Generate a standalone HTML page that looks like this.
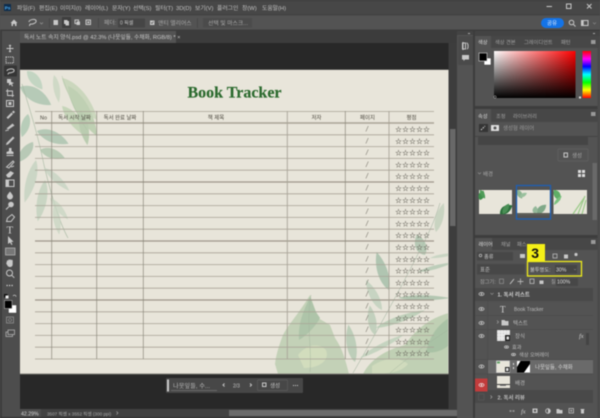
<!DOCTYPE html>
<html><head><meta charset="utf-8">
<style>
html,body{margin:0;padding:0;background:#535353;width:600px;height:418px;overflow:hidden}
svg{position:absolute;left:0;top:0;filter:blur(.42px)}
text{font-family:"Liberation Sans","Noto Sans CJK KR",sans-serif;font-size:5.800px;fill:#c4c4c4}
.d{fill:#4a473e;font-size:5.400px;text-anchor:middle}
.s{font-family:"DejaVu Sans",sans-serif;font-size:7.800px;fill:#6e6b62;stroke:#6e6b62;stroke-width:.12}
.sl{font-size:7px;fill:#77746a;font-style:italic}
.i{fill:none;stroke:#c8c8c8;stroke-width:1}
.f{fill:#c8c8c8}
.hl{stroke:#a8a396;stroke-width:.8}
.hb{stroke:#9d978a;stroke-width:1.200}
.v{stroke:#8d897d;stroke-width:.7}
</style></head><body>
<svg width="600" height="418" viewBox="0 0 600 418" xmlns="http://www.w3.org/2000/svg">
<defs>
<path id="l" d="M0 0C20-22 65-24 100 0C65 20 25 18 0 0Z"/>
<linearGradient id="gw" x1="0" x2="1" y1="0" y2="0"><stop offset="0" stop-color="#fff"/><stop offset="1" stop-color="#f00"/></linearGradient>
<linearGradient id="gb" x1="0" x2="0" y1="0" y2="1"><stop offset="0" stop-color="#000" stop-opacity="0"/><stop offset="1" stop-color="#000"/></linearGradient>
<linearGradient id="gh" x1="0" x2="0" y1="0" y2="1"><stop offset="0" stop-color="#f00"/><stop offset=".17" stop-color="#f0f"/><stop offset=".33" stop-color="#00f"/><stop offset=".5" stop-color="#0ff"/><stop offset=".67" stop-color="#0f0"/><stop offset=".83" stop-color="#ff0"/><stop offset="1" stop-color="#f00"/></linearGradient>
<clipPath id="doc"><rect x="20" y="70" width="428" height="303.500"/></clipPath>
</defs>

<!-- chrome -->
<rect width="600" height="418" fill="#535353"/>
<rect width="600" height="15" fill="#474747"/>
<rect y="0" width="600" height="1" fill="#3a3a3a"/>
<rect y="15" width="600" height="15" fill="#535353"/>
<rect y="14.500" width="600" height=".8" fill="#3d3d3d"/>
<rect y="29.500" width="600" height="1.500" fill="#3c3c3c"/>
<rect x="0" y="31" width="20" height="387" fill="#4d4d4d"/>
<rect x="0" y="31" width="2" height="387" fill="#3c3c3c"/>
<rect x="20" y="31" width="437" height="12" fill="#3c3c3c"/>
<rect x="20" y="31" width="156" height="12" fill="#535353"/>

<!-- menu -->
<rect x="4" y="4" width="7" height="7" fill="#0e2d4d"/>
<text x="4.800" y="9.600" style="font-size:4.600px;font-weight:700;fill:#4fb0f5">Ps</text>
<text x="17" y="10">파일(F)</text><text x="39" y="10">편집(E)</text><text x="60" y="10">이미지(I)</text><text x="85" y="10">레이어(L)</text><text x="112" y="10">문자(Y)</text><text x="133" y="10">선택(S)</text><text x="155" y="10">필터(T)</text><text x="176" y="10">3D(D)</text><text x="195" y="10">보기(V)</text><text x="217" y="10">플러그인</text><text x="242" y="10">창(W)</text><text x="262" y="10">도움말(H)</text>
<path class="i" d="M546.500 6.500H552"/><rect class="i" x="566.500" y="4" width="4.500" height="4.500"/><path class="i" d="M587 4l4.500 4.500M591.500 4L587 8.500"/>

<!-- options -->
<path class="f" d="M14 19.500L10.500 23H11.500V26H13V24H15V26H16.500V23H17.500Z"/>
<path class="i" d="M29 22c0-2.500 6-3.500 7-1.500s-3 4-5.500 3.500c-1 .5-1 1.500-1 2"/>
<path class="i" style="stroke:#999;stroke-width:.7" d="M40 22.500l1.500 1.500 1.500-1.500"/>
<rect x="49" y="18" width=".7" height="10" fill="#444"/>
<rect x="62" y="17" width="9" height="11" fill="#3e3e3e"/>
<rect class="f" x="53.500" y="20" width="4.500" height="5" />
<rect class="f" x="64" y="20" width="3.500" height="4"/><rect class="f" x="65.500" y="21" width="3.500" height="4.500"/>
<rect class="i" x="75" y="20" width="3.500" height="3.500"/><rect class="f" x="76.500" y="21.500" width="3.500" height="3.500"/>
<rect class="i" x="86" y="20" width="4.500" height="4.500"/><rect class="f" x="87.300" y="21.300" width="2" height="2"/>
<rect x="98" y="18" width=".7" height="10" fill="#444"/>
<text x="104" y="24.500" style="fill:#aaa">페더:</text>
<rect x="118" y="18.500" width="27" height="9" fill="#454545"/>
<text x="120" y="24.600" style="font-size:5px">0 픽셀</text>
<rect class="f" x="150" y="20.500" width="4.500" height="4.500"/>
<path d="M151 22.500l1 1 1.500-2" stroke="#444" stroke-width=".6" fill="none"/>
<text x="158" y="25" style="fill:#aaa">앤티 앨리어스</text>
<rect x="197" y="18" width=".7" height="10" fill="#444"/>
<rect x="203" y="18" width="49" height="9.500" fill="#4b4b4b"/>
<text x="208" y="25" style="fill:#aaa">선택 및 마스크...</text>
<rect x="541" y="18" width="23" height="10" rx="5" fill="#1473e6"/>
<text x="547" y="25" style="fill:#e8f0ff;font-size:5.500px">공유</text>
<circle class="i" cx="571.500" cy="22.500" r="2.300"/><path class="i" d="M573.200 24.200l2.300 2.300"/>
<rect class="i" x="581.500" y="20.500" width="6.500" height="5"/><rect class="f" x="581.500" y="20.500" width="2.200" height="5"/>
<path class="i" style="stroke:#888;stroke-width:.7" d="M593 22.500l1.500 1.500 1.500-1.500"/>

<!-- tab -->
<text x="24" y="39" style="font-size:5.700px;fill:#c8c8c8">독서 노트 속지 양식.psd @ 42.3% (나뭇잎들, 수채화, RGB/8) *  ×</text>

<!-- canvas -->
<rect x="20" y="43" width="437" height="366" fill="#282828"/>
<rect x="20" y="69.500" width="429" height="305" fill="#7b7a74"/>
<rect x="20" y="70" width="428.500" height="303.500" fill="#e8e5da"/>

<g clip-path="url(#doc)">
<!-- top-left leaves -->
<g opacity=".72">
<use href="#l" transform="translate(27,71) rotate(50) scale(.24,.3)" fill="#b5cfb9"/>
<use href="#l" transform="translate(20,87) rotate(30) scale(.36,.42)" fill="#a3c1aa"/>
<use href="#l" transform="translate(54,75) rotate(80) scale(.28,.2)" fill="#c6d5bf"/>
<use href="#l" transform="translate(62,78) rotate(50) scale(.55,.42)" fill="#c0d2b2"/>
<use href="#l" transform="translate(68,86) rotate(60) scale(.58,.42)" fill="#b0c8a5"/>
<use href="#l" transform="translate(62,106) rotate(50) scale(.42,.34)" fill="#b9cfad"/>
<use href="#l" transform="translate(80,110) rotate(78) scale(.36,.28)" fill="#a9c3a1"/>
</g>
<path d="M62 76C66 88 73 108 87 130" stroke="#a9c0a2" stroke-width=".4" fill="none"/>
<path d="M22 84C30 110 38 135 44 165C50 190 58 220 68 238" stroke="#a9baa4" stroke-width=".6" fill="none"/>
<g opacity=".75">
<use href="#l" transform="translate(28,114) rotate(105) scale(.24,.26)" fill="#a8c5ae"/>
<use href="#l" transform="translate(33,142) rotate(128) scale(.26,.3)" fill="#a8c0aa"/>
<use href="#l" transform="translate(37,131) rotate(22) scale(.34,.36)" fill="#a5c0aa"/>
<use href="#l" transform="translate(40,150) rotate(18) scale(.26,.3)" fill="#a9c2a8"/>
<use href="#l" transform="translate(36,160) rotate(105) scale(.44,.3)" fill="#c2d2bf"/>
<use href="#l" transform="translate(44,168) rotate(42) scale(.34,.22)" fill="#c4d3c1"/>
<use href="#l" transform="translate(45,180) rotate(100) scale(.42,.3)" fill="#bfd0bc"/>
<use href="#l" transform="translate(50,198) rotate(50) scale(.28,.2)" fill="#c8d6c3"/>
<use href="#l" transform="translate(54,205) rotate(80) scale(.3,.22)" fill="#c8d6c3"/>
</g>
<!-- bottom right big leaves -->
<path d="M310 295C300 312 288 325 283 335C278 348 276 356 275 364L278 374H349C345 358 342 348 335 338L330 325L318 318Z" fill="#c3d1b7"/>
<path d="M310 297C304 310 298 322 299 340C306 336 316 326 320 318L316 312Z" fill="#aec4a9"/>
<path d="M298 355C306 345 318 342 326 350C330 360 320 368 304 368Z" fill="#d2ddbd"/>
<path d="M449 313C430 318 415 330 405 345C385 350 370 360 363 374H449Z" fill="#c0d0b4"/>
<path d="M449 318C438 325 430 335 426 352C434 354 444 350 449 345Z" fill="#a9c2a5"/>
<path d="M372 366C384 358 398 356 408 364C402 372 388 374 372 374Z" fill="#d0dbbd"/>
<path d="M310 372C312 350 306 320 311 295M390 373C405 360 425 345 448 330" stroke="#9fb39c" stroke-width=".4" fill="none"/>
<!-- bottom right branch -->
<path d="M353 373C372 340 400 290 420 250C428 235 435 220 440 203" stroke="#9db09c" stroke-width=".5" fill="none"/>
<g opacity=".8">
<use href="#l" transform="translate(436,232) rotate(-75) scale(.3,.24)" fill="#c2d0bc"/>
<use href="#l" transform="translate(425,255) rotate(-112) scale(.22,.34)" fill="#abc3ac"/>
<use href="#l" transform="translate(430,258) rotate(-10) scale(.28,.1)" fill="#c2d2be"/>
<use href="#l" transform="translate(389,290) rotate(-108) scale(.4,.32)" fill="#a3bea8"/>
<use href="#l" transform="translate(382,310) rotate(-118) scale(.34,.26)" fill="#bfd0bd"/>
<use href="#l" transform="translate(418,272) rotate(-15) scale(.36,.12)" fill="#b2c8b2"/>
<use href="#l" transform="translate(398,298) rotate(0) scale(.52,.16)" fill="#a6bfa8"/>
<use href="#l" transform="translate(375,335) rotate(-100) scale(.3,.26)" fill="#b9ccb7"/>
<use href="#l" transform="translate(376,328) rotate(-20) scale(.52,.2)" fill="#b5cbb3"/>
<use href="#l" transform="translate(355,362) rotate(-100) scale(.38,.3)" fill="#b3c9b1"/>
<use href="#l" transform="translate(360,358) rotate(-28) scale(.5,.16)" fill="#bdd0ba"/>
</g>
</g>

<!-- title -->
<text x="234.500" y="97.500" text-anchor="middle" style="font-family:'Liberation Serif',serif;font-weight:700;font-size:16px;fill:#2b6a2e;stroke:#2b6a2e;stroke-width:.15">Book Tracker</text>

<!-- table -->
<path class="hl" d="M35 111.500H434"/>
<path d="M35 123H434" stroke="#a9a396" stroke-width="1.600"/>
<path class="hl" d="M35 134.800H434M35 146.600H434M35 158.400H434M35 170.200H434M35 193.800H434M35 205.600H434M35 217.400H434M35 229.200H434M35 252.800H434M35 264.600H434M35 276.400H434M35 288.200H434M35 311.800H434M35 323.600H434M35 335.400H434M35 347.200H434M35 359H434"/>
<path class="hb" d="M35 182H434M35 241H434M35 300H434"/>
<path class="v" d="M51.700 111V359M96.700 111V359M143.300 111V359"/>
<path d="M287.300 111V359" stroke="#a9a498" stroke-width=".9"/>
<path class="v" d="M345.300 111V359"/>
<path d="M389 111V359" stroke="#a39e92" stroke-width=".8"/>
<text class="d" x="43.500" y="119.300">No</text>
<text class="d" x="74.500" y="119.300">독서 시작 날짜</text>
<text class="d" x="120" y="119.300">독서 완료 날짜</text>
<text class="d" x="216" y="119.300">책 제목</text>
<text class="d" x="316.500" y="119.300">저자</text>
<text class="d" x="367.500" y="119.300">페이지</text>
<text class="d" x="411.500" y="119.300">평점</text>

<text class="sl" x="366" y="131.500">/</text><text class="sl" x="366" y="143.300">/</text><text class="sl" x="366" y="155.100">/</text><text class="sl" x="366" y="166.900">/</text><text class="sl" x="366" y="178.700">/</text><text class="sl" x="366" y="190.500">/</text><text class="sl" x="366" y="202.300">/</text><text class="sl" x="366" y="214.100">/</text><text class="sl" x="366" y="225.900">/</text><text class="sl" x="366" y="237.700">/</text><text class="sl" x="366" y="249.500">/</text><text class="sl" x="366" y="261.300">/</text><text class="sl" x="366" y="273.100">/</text><text class="sl" x="366" y="284.900">/</text><text class="sl" x="366" y="296.700">/</text><text class="sl" x="366" y="308.500">/</text><text class="sl" x="366" y="320.300">/</text><text class="sl" x="366" y="332.100">/</text><text class="sl" x="366" y="343.900">/</text><text class="sl" x="366" y="355.700">/</text>
<text class="s" x="395" y="132">☆☆☆☆☆</text><text class="s" x="395" y="143.800">☆☆☆☆☆</text><text class="s" x="395" y="155.600">☆☆☆☆☆</text><text class="s" x="395" y="167.400">☆☆☆☆☆</text><text class="s" x="395" y="179.200">☆☆☆☆☆</text><text class="s" x="395" y="191">☆☆☆☆☆</text><text class="s" x="395" y="202.800">☆☆☆☆☆</text><text class="s" x="395" y="214.600">☆☆☆☆☆</text><text class="s" x="395" y="226.400">☆☆☆☆☆</text><text class="s" x="395" y="238.200">☆☆☆☆☆</text><text class="s" x="395" y="250">☆☆☆☆☆</text><text class="s" x="395" y="261.800">☆☆☆☆☆</text><text class="s" x="395" y="273.600">☆☆☆☆☆</text><text class="s" x="395" y="285.400">☆☆☆☆☆</text><text class="s" x="395" y="297.200">☆☆☆☆☆</text><text class="s" x="395" y="309">☆☆☆☆☆</text><text class="s" x="395" y="320.800">☆☆☆☆☆</text><text class="s" x="395" y="332.600">☆☆☆☆☆</text><text class="s" x="395" y="344.400">☆☆☆☆☆</text><text class="s" x="395" y="356.200">☆☆☆☆☆</text>

<!-- contextual bar -->
<rect x="166" y="378" width="137" height="15" rx="1" fill="#474747"/>
<rect x="167" y="379.500" width="2" height="12" fill="#c8c8c8"/>
<text x="173" y="388" style="font-size:6.200px;fill:#b8b8b8">나뭇잎들, 수...</text>
<path d="M171 390.500H217" stroke="#8a8a8a" stroke-width=".6"/>
<path class="i" d="M224.500 383.500l-1.500 1.500 1.500 1.500"/>
<text x="233" y="387.500" style="font-size:5px">2/3</text>
<path class="i" d="M250 383.500l1.500 1.500-1.500 1.500"/>
<rect x="257.500" y="380" width="30" height="10.500" rx="1" fill="none" stroke="#5c5c5c" stroke-width=".7"/>
<rect class="i" x="262.500" y="383" width="3.500" height="3.500"/>
<text x="270" y="387.500" style="font-size:5.500px">생성</text>
<path d="M293 385.500H298.500" stroke="#ccc" stroke-width="1" stroke-dasharray="1 1"/>

<!-- status -->
<rect x="20" y="409" width="437" height="8" fill="#424242"/>
<rect x="20" y="409" width="21" height="8" fill="#4d4d4d"/>
<rect x="229" y="410" width="228" height="6" fill="#6a6a6a"/>
<text x="21" y="415.500" style="font-size:5.200px;fill:#d5d5d5">42.29%</text>
<text x="47" y="415.500" style="font-size:4.600px;fill:#a8a8a8">3507 픽셀 x 3552 픽셀 (300 ppi)</text>
<path d="M116.500 411.500l1.500 1.500-1.500 1.500" stroke="#aaa" stroke-width=".6" fill="none"/>
<rect y="417" width="600" height="1" fill="#2d2d2d"/>

<!-- canvas scrollbar -->
<rect x="448.500" y="43" width="8.500" height="366" fill="#3d3d3d"/>
<rect x="450" y="129" width="5.500" height="97" fill="#686868"/>
<rect x="457" y="31" width="18" height="387" fill="#535353"/>
<rect x="457" y="31" width="18" height="4" fill="#434343"/>
<rect x="473" y="31" width="2" height="387" fill="#3c3c3c"/>
<rect x="458" y="36" width="15" height="29" fill="#4a4a4a"/>
<rect class="i" x="462.500" y="43" width="3" height="6"/><path class="i" d="M466.500 43c2 0 2 5.500 .5 6M463 42v8"/>
<path class="f" d="M462 55h7v4.500h-4l-1.500 1.500v-1.500h-1.500z"/>

<!-- right panels -->
<rect x="475" y="31" width="125" height="387" fill="#535353"/>
<rect x="475" y="31" width="125" height="5" fill="#434343"/>
<rect x="475" y="36" width="125" height="12" fill="#474747"/>
<rect x="475" y="36" width="16" height="12" fill="#535353"/>
<text x="478" y="44" style="font-size:5.200px;fill:#dadada">색상</text>
<text x="495" y="44" style="font-size:5.200px;fill:#a0a0a0">색상 견본</text>
<text x="524" y="44" style="font-size:5.200px;fill:#a0a0a0">그레이디언트</text>
<text x="561" y="44" style="font-size:5.200px;fill:#a0a0a0">패턴</text>
<rect x="591" y="40" width="4.500" height="4" fill="#999"/>
<rect x="494" y="51" width="81.500" height="47" fill="url(#gw)"/>
<rect x="494" y="51" width="81.500" height="47" fill="url(#gb)"/>
<rect x="582.500" y="51" width="8.500" height="47" fill="url(#gh)"/>
<rect x="484" y="58" width="7" height="7" fill="#fff" stroke="#333" stroke-width=".5"/>
<rect x="479" y="53" width="8" height="8" fill="#000" stroke="#ddd" stroke-width=".6"/>
<circle cx="495" cy="97" r="1.200" fill="none" stroke="#ccc" stroke-width=".5"/>
<rect x="579" y="96.500" width="2" height="2" fill="#ddd"/>

<!-- properties -->
<rect x="475" y="106" width="125" height="3" fill="#3d3d3d"/>
<rect x="475" y="109" width="125" height="13" fill="#474747"/>
<rect x="475" y="109" width="16" height="13" fill="#535353"/>
<text x="478" y="118" style="font-size:5.200px;fill:#dadada">속성</text>
<text x="496" y="118" style="font-size:5.200px;fill:#a0a0a0">조정</text>
<text x="513" y="118" style="font-size:5.200px;fill:#a0a0a0">라이브러리</text>
<rect x="591" y="112" width="4.500" height="4" fill="#999"/>
<rect x="479" y="124" width="9" height="8" fill="#353535"/>
<path d="M481 130l4-4" stroke="#ddd" stroke-width="1" stroke-dasharray="1.500 1"/>
<rect x="491" y="125" width="8" height="6" fill="#ddd" rx=".5"/><circle cx="495" cy="128" r="1.500" fill="#555"/>
<text x="503" y="130" style="font-size:5.400px;fill:#999">생성형 레이어</text>
<rect x="475" y="136" width="125" height=".8" fill="#404040"/>
<rect x="478" y="137" width="110" height="8" fill="#454545"/>
<rect x="558" y="149" width="30" height="12" rx="1" fill="none" stroke="#646464" stroke-width=".7"/>
<rect class="i" x="564" y="153" width="3.500" height="4"/>
<text x="572" y="157.500" style="font-size:5.400px;fill:#aaa">생성</text>
<rect x="592.500" y="163" width="4.500" height="57" fill="#696969"/>
<path d="M478 172.500l1.500 1.500 1.500-1.500" stroke="#999" stroke-width=".6" fill="none"/>
<text x="483" y="176" style="font-size:5.400px;fill:#a8a8a8">배경</text>
<g fill="#ddd"><rect x="578" y="170" width="3" height="3"/><rect x="582" y="170" width="3" height="3"/><rect x="578" y="174" width="3" height="3"/><rect x="582" y="174" width="3" height="3"/></g>

<rect x="479" y="190" width="33" height="24" fill="#e8e5da"/>
<use href="#l" transform="translate(480,200) rotate(-70) scale(.1,.18)" fill="#3f8f4c"/>
<use href="#l" transform="translate(480,190) rotate(60) scale(.1,.12)" fill="#4f9c58"/>
<use href="#l" transform="translate(500,214) rotate(-35) scale(.15,.24)" fill="#2c6f3c"/>
<use href="#l" transform="translate(503,214) rotate(-60) scale(.12,.16)" fill="#4a8f55"/>

<rect x="517" y="190" width="33" height="25" fill="#e8e5da"/>
<use href="#l" transform="translate(517,190) rotate(60) scale(.1,.16)" fill="#8db491"/>
<use href="#l" transform="translate(520,197) rotate(-30) scale(.08,.12)" fill="#9ac09e"/>
<use href="#l" transform="translate(537,214) rotate(-45) scale(.13,.2)" fill="#7fa888"/>
<use href="#l" transform="translate(535,214) rotate(-85) scale(.08,.16)" fill="#94b89a"/>
<rect x="517" y="213" width="33" height="2" fill="#5e5e58"/>
<rect x="516.500" y="185.500" width="34" height="33.500" fill="none" stroke="#1d5fb5" stroke-width="1.300"/>

<rect x="553.500" y="190" width="33.500" height="24" fill="#e8e5da"/>
<use href="#l" transform="translate(554,190) rotate(60) scale(.12,.2)" fill="#5fae66"/>
<use href="#l" transform="translate(554,205) rotate(-50) scale(.12,.1)" fill="#7bc27f"/>
<path d="M573 214L584 198M578 214L585 196M582 214L586 200" stroke="#9ccb8a" stroke-width="1.200" fill="none"/>

<!-- layers -->
<rect x="475" y="235" width="125" height="3" fill="#3d3d3d"/>
<rect x="475" y="238" width="125" height="12" fill="#474747"/>
<rect x="475" y="238" width="17" height="12" fill="#535353"/>
<text x="478.500" y="246" style="font-size:5.200px;fill:#dadada">레이어</text>
<text x="501" y="246" style="font-size:5.200px;fill:#a0a0a0">채널</text>
<text x="517" y="246" style="font-size:5.200px;fill:#a0a0a0">패스</text>
<rect x="591" y="240" width="4.500" height="4" fill="#999"/>

<rect x="477" y="252" width="36" height="8.500" fill="#474747"/>
<circle cx="480.500" cy="255.500" r="1.300" fill="none" stroke="#ccc" stroke-width=".6"/>
<text x="484" y="258.500" style="font-size:5.200px">종류</text>
<rect class="f" x="520" y="254" width="5" height="4"/>
<rect class="i" x="553" y="254" width="4" height="4" style="stroke-width:.7"/>
<rect class="f" x="564" y="254.500" width="4" height="4"/>
<circle class="f" cx="576" cy="254.500" r="1.600"/>
<rect x="477" y="264" width="48" height="10.500" fill="#474747"/>
<text x="480" y="271.500" style="font-size:5.400px">표준</text>
<rect x="529" y="264" width="51" height="10" fill="#535353"/>
<text x="530" y="271.500" style="font-size:5.200px;fill:#d0d0d0">불투명도:</text>
<rect x="555" y="265" width="22" height="8.500" fill="#454545"/>
<text x="556" y="271.500" style="font-size:5.200px;fill:#ddd">30%</text>
<path d="M574 269l1 1 1-1" stroke="#999" stroke-width=".5" fill="none"/>
<rect x="527.500" y="261.500" width="54" height="14.500" fill="none" stroke="#efec1c" stroke-width="1.300"/>
<rect x="527" y="244" width="18" height="17" fill="#f4ef17"/>
<text x="531.300" y="258" style="font-size:14px;font-weight:700;fill:#111">3</text>

<text x="480" y="283.500" style="font-size:5.200px;fill:#a8a8a8">잠그기:</text>
<rect x="499.500" y="279" width="4" height="4.500" fill="none" stroke="#999" stroke-width=".6"/>
<path d="M510 284l4-5" stroke="#ccc" stroke-width=".9"/>
<path class="i" style="stroke-width:.7" d="M520.500 278.500v6M517.500 281.500h6"/>
<rect class="i" style="stroke-width:.7" x="530" y="279" width="4" height="4.500"/>
<rect class="f" x="539.500" y="280.500" width="4" height="3.500"/>
<text x="551" y="283.500" style="font-size:5.200px;fill:#a8a8a8">칠:</text>
<rect x="556" y="278" width="22" height="8" fill="#474747"/>
<text x="557" y="283.700" style="font-size:5.200px;fill:#ddd">100%</text>

<rect x="475" y="288" width="118" height="12.500" fill="#494949"/>
<rect x="475" y="390" width="118" height="13" fill="#494949"/>
<g fill="none" stroke="#484848" stroke-width=".5"><path d="M475 301H593M475 315.500H593M475 329.500H593M475 359.500H593M475 374H593"/></g>
<rect x="487.500" y="288" width=".5" height="102" fill="#484848"/>

<!-- eye icons -->
<g fill="none" stroke="#d8d8d8" stroke-width=".7">
<ellipse cx="481.500" cy="294" rx="2.500" ry="1.500"/>
<ellipse cx="481.500" cy="309" rx="2.500" ry="1.500"/>
<ellipse cx="481.500" cy="323" rx="2.500" ry="1.500"/>
<ellipse cx="481.500" cy="336" rx="2.500" ry="1.500"/>
<ellipse cx="506.500" cy="347" rx="2" ry="1.200"/>
<ellipse cx="513.500" cy="354.500" rx="2" ry="1.200"/>
</g>
<g fill="#d8d8d8"><circle cx="481.500" cy="294" r=".8"/><circle cx="481.500" cy="309" r=".8"/><circle cx="481.500" cy="323" r=".8"/><circle cx="481.500" cy="336" r=".8"/><circle cx="506.500" cy="347" r=".6"/><circle cx="513.500" cy="354.500" r=".6"/></g>
<path d="M490.500 293l1.500 1.500 1.500-1.500" stroke="#999" stroke-width=".6" fill="none"/>
<text x="497.500" y="296.500" style="font-size:5.400px;font-weight:700;fill:#cfcfcf">1. 독서 리스트</text>

<text x="500" y="312.500" style="font-family:'Liberation Serif',serif;font-size:9px;fill:#d5d5d5">T</text>
<text x="514" y="311" style="font-size:5px;fill:#bdbdbd">Book Tracker</text>

<path d="M497 320.500l1.500 1.500-1.500 1.500" stroke="#aaa" stroke-width=".6" fill="none"/>
<path class="f" d="M501.500 320h3l1 1h3v4.500h-7z"/>
<text x="513" y="325" style="font-size:5.400px;fill:#bdbdbd">텍스트</text>

<rect x="497" y="330" width="13" height="11" fill="#d9d9d9"/>
<path d="M497 332h13M497 335h13M497 338h13M499 330v11M502 330v11M505 330v11M508 330v11" stroke="#efefef" stroke-width="1"/>
<rect x="505" y="335" width="5" height="6" fill="#222"/><rect x="506.500" y="336.500" width="2.500" height="3" fill="#ddd"/>
<text x="515" y="338" style="font-size:5.400px;fill:#bdbdbd">장식</text>
<text x="579" y="338" style="font-family:'Liberation Serif',serif;font-style:italic;font-size:6.500px;fill:#ccc">fx</text>
<rect x="586" y="333" width="3" height="12" fill="#444"/>
<text x="512" y="349" style="font-size:5.200px;fill:#bdbdbd">효과</text>
<text x="519" y="356.500" style="font-size:5.200px;fill:#bdbdbd">색상 오버레이</text>

<rect x="488" y="360" width="105" height="13.500" fill="#6a6a6a"/>
<ellipse cx="481.500" cy="366.500" rx="2.500" ry="1.500" fill="none" stroke="#d8d8d8" stroke-width=".7"/><circle cx="481.500" cy="366.500" r=".8" fill="#d8d8d8"/>
<rect x="496.500" y="361" width="13" height="11.500" fill="#e8e5da" stroke="#ddd" stroke-width=".6"/>
<rect x="497" y="361.500" width="3" height="2" fill="#67a36b"/>
<rect x="505" y="367" width="4.500" height="5" fill="#222"/><rect x="506" y="368" width="2.500" height="3" fill="#ddd"/>
<path d="M513.500 363v2M513.500 367v2" stroke="#ddd" stroke-width="1"/>
<rect x="517" y="361" width="13" height="11.500" fill="#000"/>
<path d="M517 361h3.500l-3.500 6zM530 364l-6 8.500h6z" fill="#fff"/>
<text x="535" y="369" style="font-size:5.400px;fill:#d8d8d8">나뭇잎들, 수채화</text>

<rect x="475" y="378.500" width="12.500" height="13" fill="#c23c3c"/>
<ellipse cx="481.500" cy="385" rx="2.500" ry="1.500" fill="none" stroke="#f2f2f2" stroke-width=".7"/><circle cx="481.500" cy="385" r=".8" fill="#f2f2f2"/>
<rect x="497" y="376" width="13" height="12" fill="#e8e5da"/>
<rect x="497" y="384" width="13" height="1" fill="#444"/>
<rect x="500" y="385" width="6" height="1" fill="#777"/>
<text x="515" y="385" style="font-size:5.400px;fill:#bdbdbd">배경</text>

<rect x="478.500" y="394" width="5.500" height="6" fill="none" stroke="#5e5e5e" stroke-width=".5"/>
<path d="M490.500 395.500l1.500 1.500-1.500 1.500" stroke="#aaa" stroke-width=".6" fill="none"/>
<text x="497.500" y="399.500" style="font-size:5.400px;font-weight:700;fill:#bdbdbd">2. 독서 리뷰</text>

<!-- layer bottom icons -->
<path d="M509.500 411h5.500" stroke="#999" stroke-width="1.500" stroke-dasharray="2 1"/>
<text x="521" y="413.500" style="font-family:'Liberation Serif',serif;font-style:italic;font-size:6.500px;fill:#ccc">fx</text>
<rect class="f" x="532.500" y="408.500" width="5" height="4.500"/><circle cx="535" cy="410.800" r="1.200" fill="#555"/>
<circle cx="548" cy="411" r="2.300" fill="none" stroke="#ccc" stroke-width=".8"/><path class="f" d="M548 408.700a2.300 2.300 0 0 1 0 4.600z"/>
<path class="f" d="M556.500 409h2.500l1 1h2.500v3.500h-6z"/>
<rect class="i" style="stroke-width:.7" x="569" y="408.500" width="4.500" height="4.500"/><path d="M571.200 409.500v2.500M570 410.700h2.500" stroke="#ccc" stroke-width=".5"/>
<path class="f" d="M580.500 409h4v.8h-.5v3.700h-3v-3.700h-.5z"/>

<!-- panel right edge & resize marks -->
<rect x="597.500" y="48" width="2.500" height="370" fill="#4a4a4a"/>
<path d="M468 33.500h2M593 33.500h2" stroke="#aaa" stroke-width="1"/>

<!-- toolbar icons -->
<g class="i" style="stroke-width:.9">
<path d="M10 45v7M6.500 48.500h7M10 45l-1 1M10 45l1 1M10 52l-1-1M10 52l1-1"/>
<rect x="6" y="57" width="7.500" height="6" stroke-dasharray="1.200 .8"/>
</g>
<rect x="4" y="65.500" width="13" height="11" fill="#353535" rx="1"/>
<path class="i" d="M7 71c0-2 6-3 7-1s-3 3-5 2.800c-.8.400-1 1-1 1.700"/>
<path class="f" d="M7 79h4v4H7zM9 81l5 2-2 1 1 2-1 .5-1-2-2 1z"/>
<path class="i" style="stroke-width:.9" d="M7.500 89v6.500H14M6 91h6.500v6"/>
<rect class="i" x="6.500" y="100.500" width="7" height="6"/><rect class="f" x="8.500" y="102" width="3" height="3"/>
<path d="M6.500 117.500l5-5 1.500 1.500-5 5zM12 112l1.500-1.500 1.500 1.500-1.500 1.500z" fill="#c4c4c4"/>
<path d="M6.500 128.500l6-5 2 2-6 4z" fill="#c4c4c4"/><path d="M5.500 131c1-1 2.500-1 3-.5" stroke="#c4c4c4" fill="none"/>
<path d="M6.500 143l6.500-6.500 1.500 1.500-6.500 6.500-2 .5z" fill="#c4c4c4"/>
<path class="f" d="M9 148h2.500v3l2 1v2h-7v-2l2.500-1zM6.500 155h7v1h-7z"/>
<path d="M6.500 167l6.500-6 1 1-5 6zM11 167l3 -1" stroke="#c4c4c4" fill="none"/>
<path class="f" d="M6 175l4.500-4 3.500 2-4 4.500H7.500z"/>
<rect class="i" x="6" y="180" width="8" height="6.500"/><rect class="f" x="6" y="180" width="3" height="6.500"/>
<path class="f" d="M10 191.500c1.500 2 3 3.500 3 5a3 3 0 0 1-6 0c0-1.500 1.500-3 3-5z"/>
<circle class="f" cx="11" cy="204.500" r="2.800"/><path d="M9 206.500l-3 3" stroke="#c4c4c4" stroke-width="1.200"/>
<path class="i" d="M6.500 221.500l1-3.500 4.500-3.500 2.500 2.500-3.500 4.500z"/>
<text x="6.500" y="233.500" style="font-family:'Liberation Serif',serif;font-size:11px;fill:#d0d0d0">T</text>
<path class="f" d="M8 236v8l2-1.500 1.500 2.500 1-.5-1.300-2.500 2.300-.2z"/>
<rect x="5.500" y="248" width="9.500" height="7" fill="#777" stroke="#bbb" stroke-width=".7"/>
<path class="f" d="M7 261c0-1 1-1 1.200 0 0-2 1.500-2 1.500-.5 0-1.500 1.500-1.500 1.500 0 .3-1 1.500-1 1.500 .5v3c0 2-1 3-3 3-1.500 0-2-1-3.500-3.500z"/>
<circle class="i" cx="9.500" cy="273" r="3"/><path class="i" d="M11.800 275.300l2.500 2.500"/>
<path d="M6.500 285.500H14" stroke="#ddd" stroke-width="1.200" stroke-dasharray="1.200 1.300"/>
<rect x="4" y="294" width="3.500" height="3.500" fill="#111"/><rect x="5.500" y="295.500" width="3" height="3" fill="#eee"/>
<path d="M13 296c1-1.500 3-1 3 .8" stroke="#ccc" stroke-width=".7" fill="none"/>
<rect x="8.500" y="305" width="8" height="8" fill="#fff" stroke="#333" stroke-width=".4"/>
<rect x="4.500" y="300.500" width="7.500" height="8" fill="#000" stroke="#ccc" stroke-width=".5"/>
<rect x="6.500" y="317" width="7" height="6" fill="none" stroke="#999" stroke-width=".7"/><circle cx="10" cy="320" r="1.500" fill="none" stroke="#999" stroke-width=".6"/>
<rect x="6" y="332" width="6.500" height="4.500" fill="none" stroke="#bbb" stroke-width=".7"/><rect x="8" y="330" width="6.500" height="4.500" fill="#4d4d4d" stroke="#bbb" stroke-width=".7"/>
</svg>
</body></html>
